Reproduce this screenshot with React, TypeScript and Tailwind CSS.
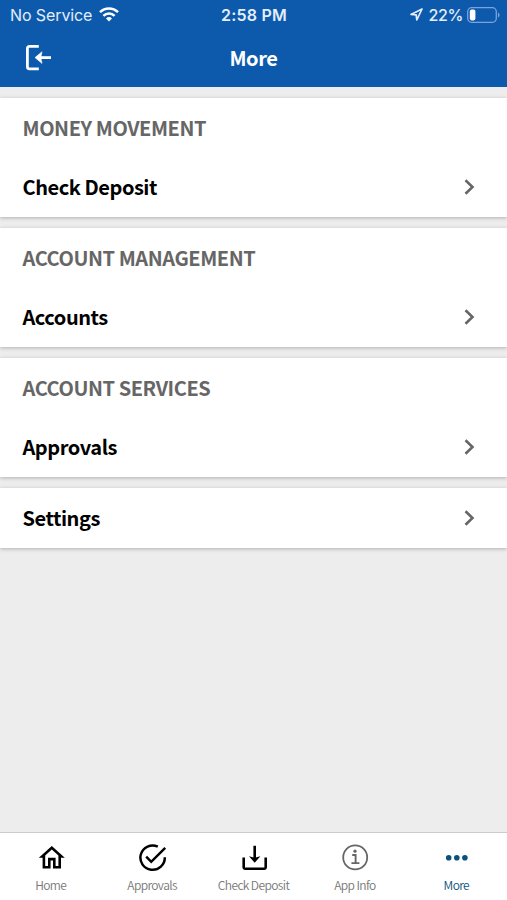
import React from "react";

interface MenuSection {
  title?: string;
  label: string;
}

const sections: MenuSection[] = [
  { title: "MONEY MOVEMENT", label: "Check Deposit" },
  { title: "ACCOUNT MANAGEMENT", label: "Accounts" },
  { title: "ACCOUNT SERVICES", label: "Approvals" },
  { label: "Settings" },
];

function StatusBar() {
  return (
    <div className="grid h-[29px] grid-cols-3 items-center pl-[10px] pr-[7px] font-['Inter',sans-serif] text-[16px] text-[#e4edfa]">
      <div className="flex items-center gap-[7px] whitespace-nowrap">
        <span className="tracking-[-0.1px]">No Service</span>
        <svg width="20" height="15" viewBox="0 0 20 15" fill="none" stroke="#fff" strokeWidth="2.5">
          <path d="M1 5.2a12.8 12.8 0 0 1 18 0" />
          <path d="M4.4 8.8a8 8 0 0 1 11.2 0" />
          <path d="M10 14.6 7 11.5a4.3 4.3 0 0 1 6 0Z" fill="#fff" stroke="none" />
        </svg>
      </div>
      <span className="pr-[2px] text-center font-semibold tracking-[0.2px]">2:58 PM</span>
      <div className="flex items-center justify-end">
        <svg className="mr-[6px]" width="13" height="13" viewBox="0 0 13 13" fill="none" stroke="currentColor" strokeWidth="1.7" strokeLinejoin="round">
          <path d="M12 1 1 6.4l5.2.5.6 5.1Z" />
        </svg>
        <span className="mr-[4px] font-medium tracking-[-0.4px]">22%</span>
        <svg width="33" height="16" viewBox="0 0 33 16" fill="none">
          <rect x="0.7" y="0.7" width="28.6" height="14.6" rx="4" stroke="#7ba4da" strokeWidth="1.3" />
          <rect x="2.8" y="2.6" width="5.6" height="10.8" rx="1.8" fill="#fff" />
          <path d="M31 5.5c2 .8 2 4.2 0 5Z" fill="#7ba4da" />
        </svg>
      </div>
    </div>
  );
}

function Header() {
  return (
    <header className="h-[87px] shrink-0 bg-[#0d5aad] text-white">
      <StatusBar />
      <div className="grid h-[58px] grid-cols-3 items-center">
        <button className="ml-[26px] w-[26px]" aria-label="Log out">
          <svg width="26" height="26" viewBox="0 0 26 26" fill="none" stroke="currentColor" strokeWidth="2.8">
            <path d="M12.8 1.4H3.4a2 2 0 0 0-2 2v18.4a2 2 0 0 0 2 2h9.4" />
            <path d="M25 12.6H12" />
            <path d="M9 12.6 16 6.8l-1.2 5.8 1.2 5.8Z" fill="currentColor" stroke="currentColor" strokeWidth="0.6" />
          </svg>
        </button>
        <h1 className="text-center text-[20px] font-bold tracking-[-0.4px]">More</h1>
      </div>
    </header>
  );
}

function Section({ title, label }: MenuSection) {
  return (
    <section className="bg-white pr-[23px] pl-[22.5px] shadow-[0_1px_4px_rgba(0,0,0,0.26)]">
      {title && (
        <h2 className="h-[59px] text-[20px] leading-[60px] font-bold tracking-[-0.43px] text-[#666]">
          {title}
        </h2>
      )}
      <button className="flex h-[60px] w-full items-center justify-between pr-[9px]">
        <span className="text-[20px] leading-[60px] font-bold tracking-[-0.45px] text-black [font-feature-settings:'liga'_1]">
          {label}
        </span>
        <svg width="11" height="16" viewBox="0 0 11 16" fill="none" stroke="#666" strokeWidth="2.6">
          <path d="m1.5 1.2 7 6.8-7 6.8" />
        </svg>
      </button>
    </section>
  );
}

interface TabProps {
  label: string;
  className: string;
  children: React.ReactNode;
}

function Tab({ label, className, children }: TabProps) {
  return (
    <button className={`flex flex-1 flex-col items-center pt-[10px] ${className}`}>
      <svg width="30" height="30" viewBox="0 0 30 30" fill="none">
        {children}
      </svg>
      <span className="mt-[3px] text-[12px] leading-[18px] font-[350] tracking-[-0.6px] whitespace-nowrap">
        {label}
      </span>
    </button>
  );
}

function TabBar() {
  return (
    <nav className="flex h-[68px] shrink-0 border-t border-[#ccc] bg-white">
      <Tab label="Home" className="text-[#777]">
        <path
          d="M15.8 6.4l6.6 6V23h-2.8v-8.2H12V23H9.2V12.4l6.6-6M15.8 2.9 2.8 14.8h3.8v10.8h8V17.5h2.4v8.1h8V14.8h3.8Z"
          fill="#000"
        />
      </Tab>
      <Tab label="Approvals" className="text-[#777]">
        <path d="M20.8 3.6a12.2 12.2 0 1 0 7 10.6" stroke="#000" strokeWidth="2.5" />
        <path d="m9.2 13.7 5 5.1L28.2 4.8" stroke="#000" strokeWidth="2.5" />
      </Tab>
      <Tab label="Check Deposit" className="text-[#777]">
        <path d="M4.7 14.6v9.6a1.5 1.5 0 0 0 1.5 1.5h19a1.5 1.5 0 0 0 1.5-1.5v-9.6" stroke="#000" strokeWidth="2.6" />
        <path d="M15.7 2.8v13" stroke="#000" strokeWidth="2.6" />
        <path d="m10 13.3 5.7 1.4 5.7-1.4-5.7 6.5Z" fill="#000" />
      </Tab>
      <Tab label="App Info" className="text-[#777]">
        <circle cx="15.2" cy="14.4" r="12" stroke="#666" strokeWidth="1.8" />
        <circle cx="15" cy="8.2" r="1.6" fill="#666" />
        <path d="M12.2 12h3.4v8M11.4 20.1h8" stroke="#666" strokeWidth="1.9" />
      </Tab>
      <Tab label="More" className="text-[#0b527a]">
        <circle cx="7.7" cy="14.8" r="2.8" fill="#0b527a" />
        <circle cx="15.8" cy="14.8" r="2.8" fill="#0b527a" />
        <circle cx="23.9" cy="14.8" r="2.8" fill="#0b527a" />
      </Tab>
    </nav>
  );
}

export default function App() {
  return (
    <div className="flex h-[900px] w-[507px] flex-col overflow-hidden bg-[#ededed] font-['Noto_Sans_CJK_SC',sans-serif]">
      <Header />
      <main className="flex flex-1 flex-col gap-[11px] pt-[11px]">
        {sections.map((section) => (
          <Section key={section.label} {...section} />
        ))}
      </main>
      <TabBar />
    </div>
  );
}
